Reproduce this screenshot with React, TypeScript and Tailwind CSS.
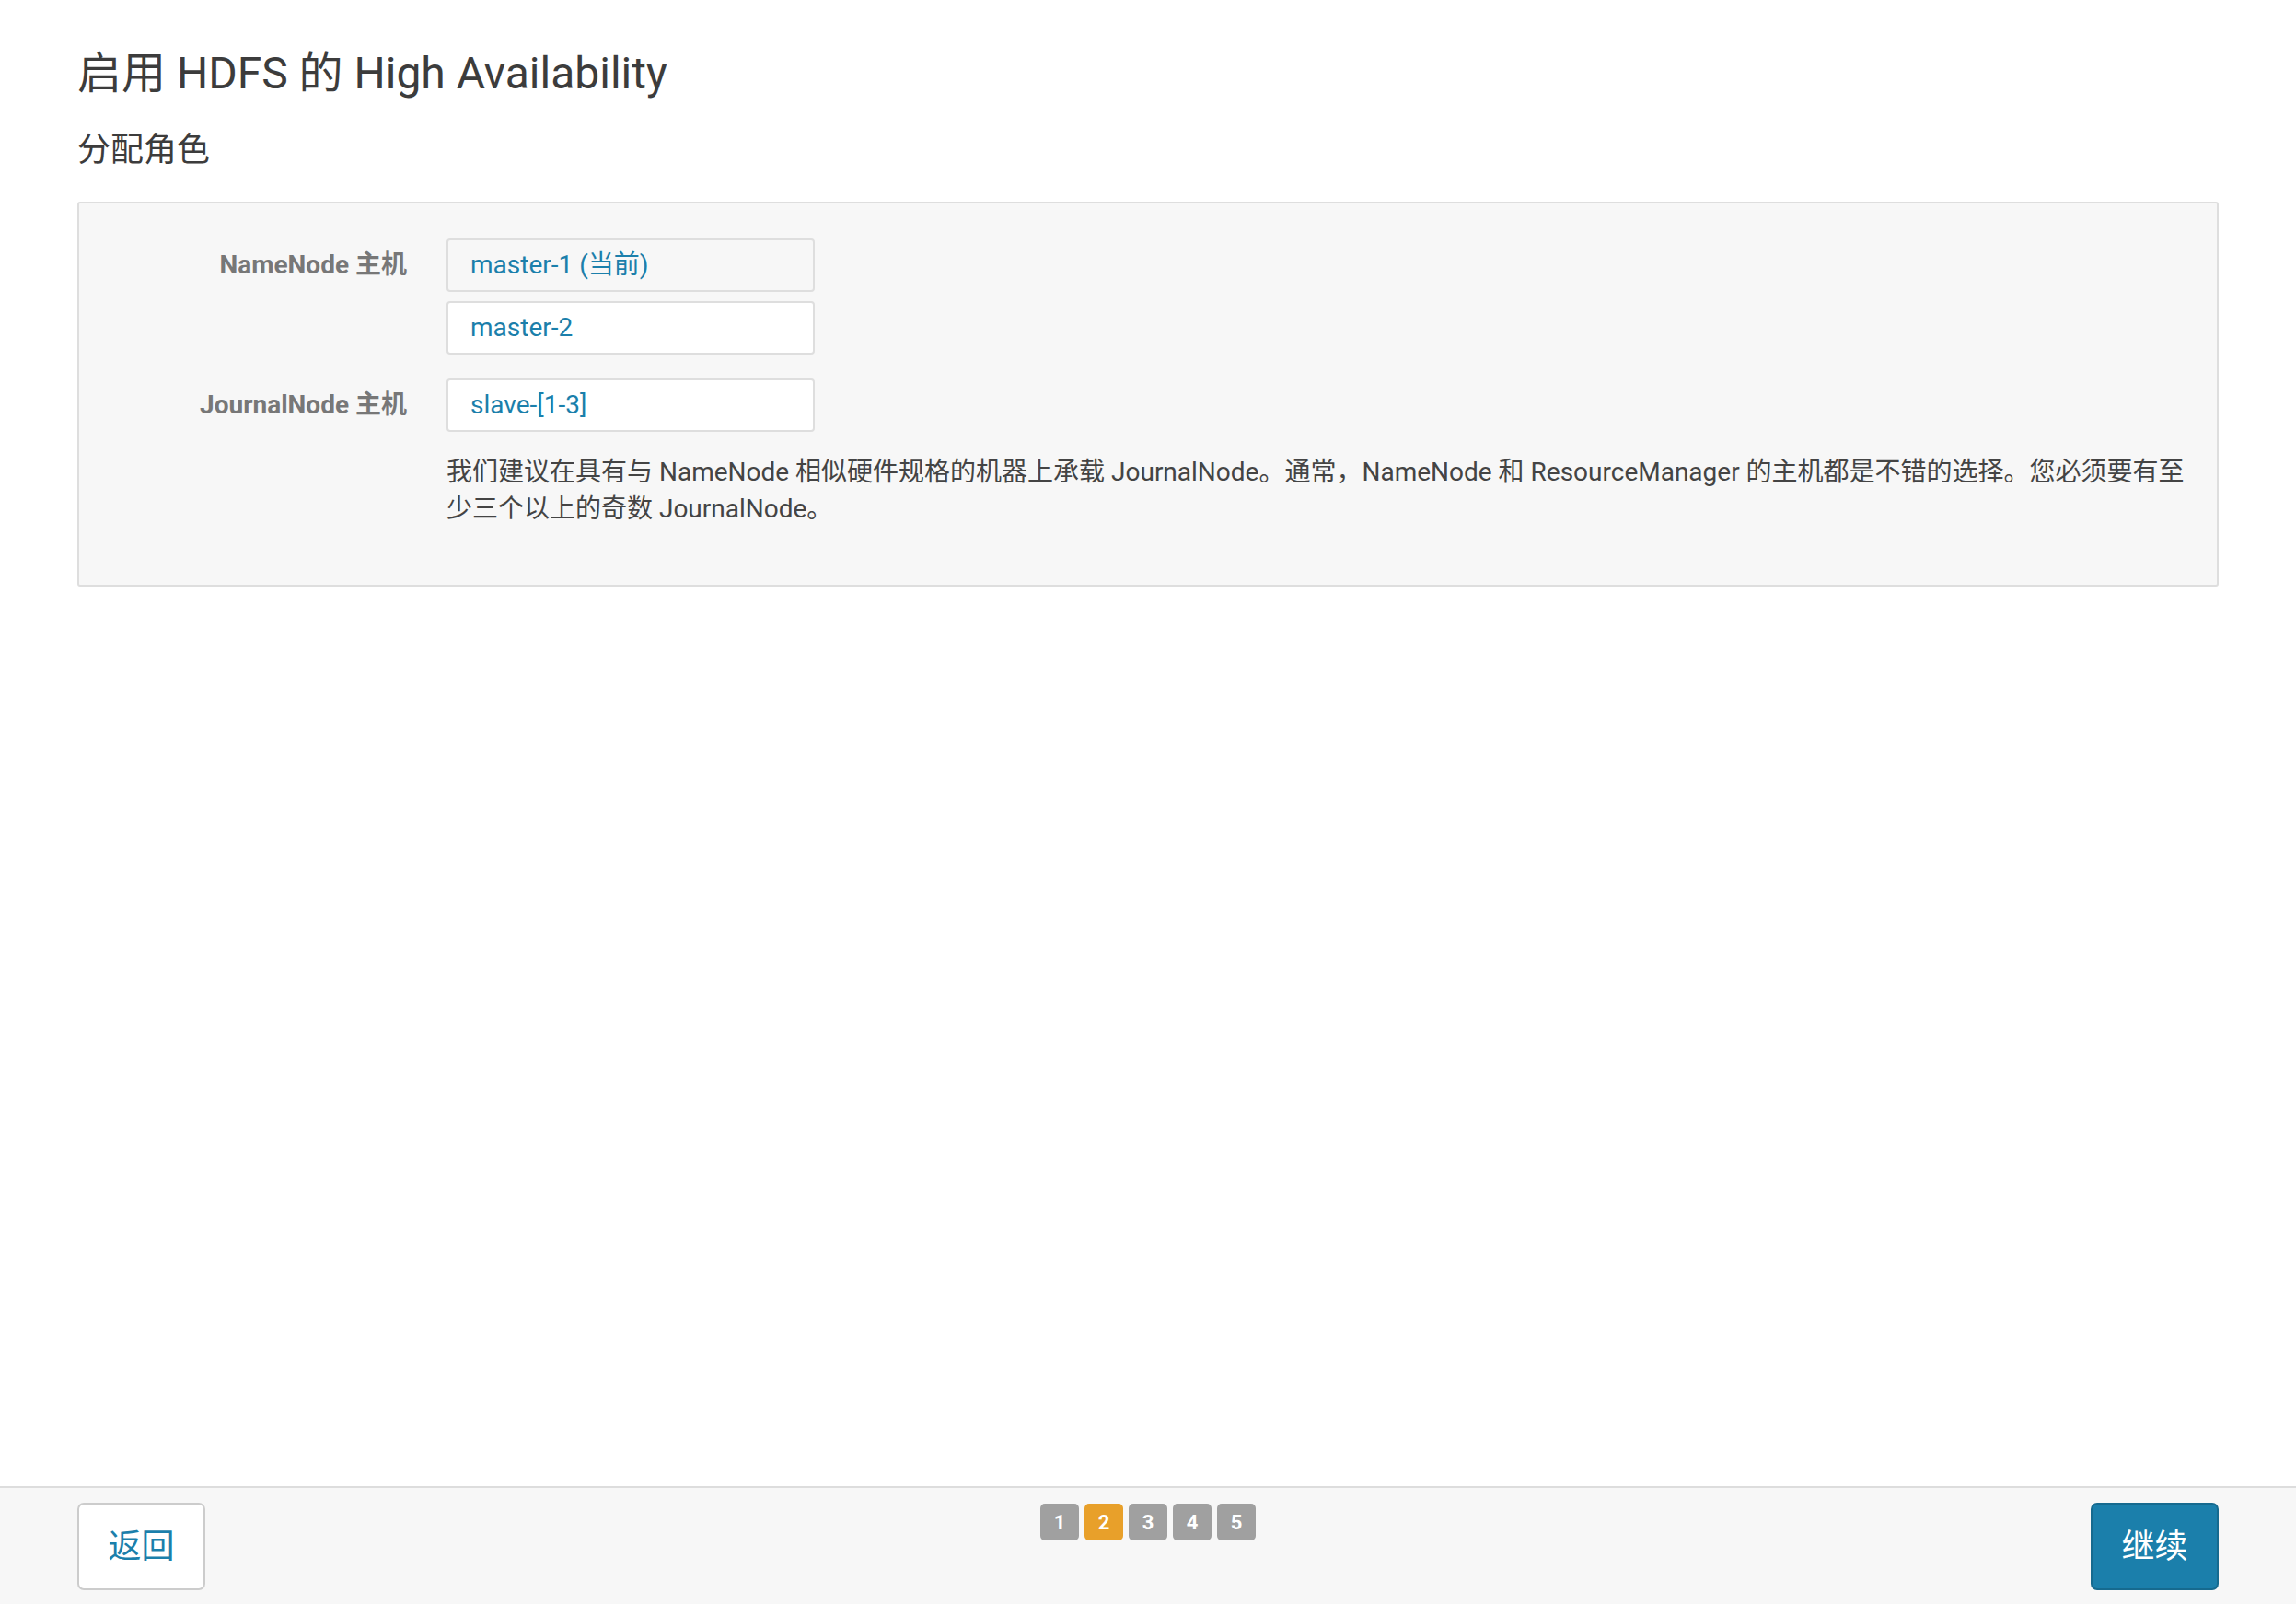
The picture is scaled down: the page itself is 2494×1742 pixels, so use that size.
import React from 'react';

const font = { fontFamily: 'Roboto, "Noto Sans CJK SC", sans-serif' };

function HostInput({ value, current }: { value: string; current?: boolean }) {
  return (
    <div
      className={
        'w-[400px] h-[58px] flex items-center px-[24px] border-2 rounded-[4px] text-[28px] text-[#1b7fab] ' +
        (current ? 'bg-[#f7f7f7] border-[#dedede]' : 'bg-white border-[#dedede]')
      }
    >
      {value}
    </div>
  );
}

export default function App() {
  const steps = [1, 2, 3, 4, 5];

  return (
    <div style={font} className="min-h-screen flex flex-col bg-white text-[#3c3c3c]">
      {/* Content */}
      <div className="flex-1 px-[84px] pt-[52px]">
        <h1 className="text-[48px] leading-[56px] font-normal text-[#3c3c3c]">启用 HDFS 的 High Availability</h1>
        <h2 className="mt-[33px] text-[36px] leading-[44px] font-normal text-[#3c3c3c]">分配角色</h2>

        <div className="mt-[34px] bg-[#f7f7f7] border-2 border-[#dedede] rounded-[3px] pt-[38px] pb-[62px] pr-[28px]">
          {/* NameNode */}
          <div className="flex items-start">
            <div className="w-[356px] h-[58px] flex items-center justify-end text-[28px] font-bold text-[#777]">
              NameNode 主机
            </div>
            <div className="ml-[43px] flex flex-col gap-[10px]">
              <HostInput value="master-1 (当前)" current />
              <HostInput value="master-2" />
            </div>
          </div>

          {/* JournalNode */}
          <div className="flex items-start mt-[26px]">
            <div className="w-[356px] h-[58px] flex items-center justify-end text-[28px] font-bold text-[#777]">
              JournalNode 主机
            </div>
            <div className="ml-[43px] flex-1">
              <HostInput value="slave-[1-3]" />
              <p className="mt-[24px] text-[28px] leading-[40px] text-[#444]">
                我们建议在具有与 NameNode 相似硬件规格的机器上承载 JournalNode。通常，NameNode 和 ResourceManager 的主机都是不错的选择。您必须要有至少三个以上的奇数 JournalNode。
              </p>
            </div>
          </div>
        </div>
      </div>

      {/* Footer */}
      <div className="h-[128px] border-t-2 border-[#dddddd] bg-[#f7f7f7] px-[84px] pt-[16px] flex items-start justify-between">
        <button className="w-[139px] h-[95px] bg-white border-2 border-[#cccccc] rounded-[7px] text-[36px] text-[#1b7fab]">
          返回
        </button>
        <div className="mt-[1px] flex gap-[6px]">
          {steps.map((s) => (
            <span
              key={s}
              className={
                'w-[42px] h-[40px] rounded-[5px] flex items-center justify-center text-[22px] font-bold text-white ' +
                (s === 2 ? 'bg-[#e8a02a]' : 'bg-[#a0a0a0]')
              }
            >
              {s}
            </span>
          ))}
        </div>
        <button className="w-[139px] h-[95px] bg-[#1b7fab] border-2 border-[#166a8f] rounded-[7px] text-[36px] text-white">
          继续
        </button>
      </div>
    </div>
  );
}
